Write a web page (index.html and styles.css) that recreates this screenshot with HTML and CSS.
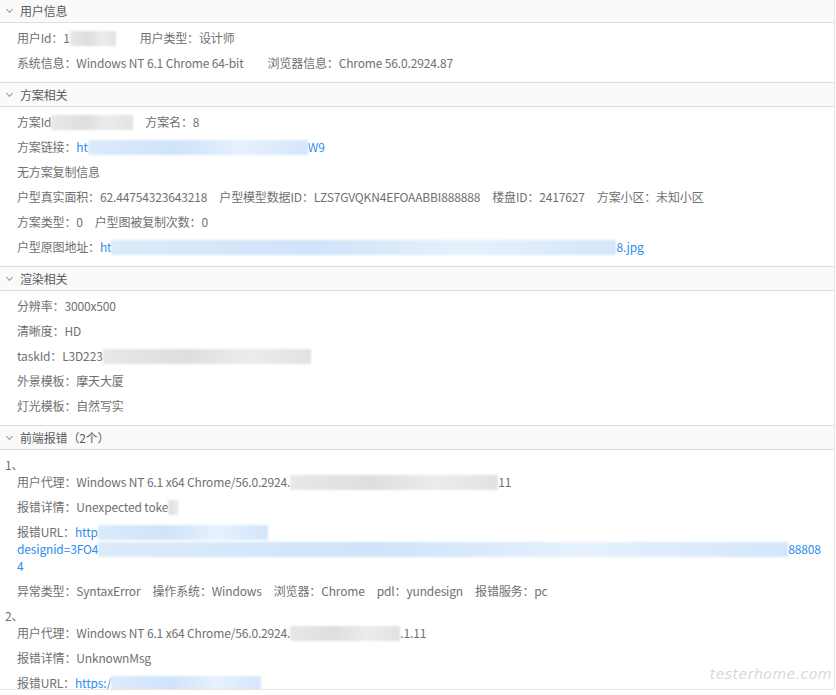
FILE: index.html
```html
<!DOCTYPE html>
<html lang="zh">
<head>
<meta charset="utf-8">
<link rel="stylesheet" href="styles.css">
</head>
<body>
<div class="panel">
  <section class="sec first">
    <div class="head"><span class="chev"></span><span class="title">用户信息</span></div>
    <div class="body">
      <div class="row wide"><span class="f">用户Id：1<span class="rd gray w46"></span></span><span class="f">用户类型：设计师</span></div>
      <div class="row wide"><span class="f">系统信息：Windows NT 6.1 Chrome 64-bit</span><span class="f">浏览器信息：Chrome 56.0.2924.87</span></div>
    </div>
  </section>
  <section class="sec">
    <div class="head"><span class="chev"></span><span class="title">方案相关</span></div>
    <div class="body">
      <div class="row"><span class="f">方案Id<span class="rd gray w82"></span></span><span class="f">方案名：8</span></div>
      <div class="row"><span class="f">方案链接：<a class="lk">ht<span class="rd blue w220"></span>W9</a></span></div>
      <div class="row"><span class="f">无方案复制信息</span></div>
      <div class="row"><span class="f">户型真实面积：62.44754323643218</span><span class="f">户型模型数据ID：LZS7GVQKN4EFOAABBI888888</span><span class="f">楼盘ID：2417627</span><span class="f">方案小区：未知小区</span></div>
      <div class="row"><span class="f">方案类型：0</span><span class="f">户型图被复制次数：0</span></div>
      <div class="row"><span class="f">户型原图地址：<a class="lk">ht<span class="rd blue w505"></span>8.jpg</a></span></div>
    </div>
  </section>
  <section class="sec">
    <div class="head"><span class="chev"></span><span class="title">渲染相关</span></div>
    <div class="body">
      <div class="row"><span class="f">分辨率：3000x500</span></div>
      <div class="row"><span class="f">清晰度：HD</span></div>
      <div class="row"><span class="f">taskId：L3D223<span class="rd gray w208"></span></span></div>
      <div class="row"><span class="f">外景模板：摩天大厦</span></div>
      <div class="row"><span class="f">灯光模板：自然写实</span></div>
    </div>
  </section>
  <section class="sec">
    <div class="head"><span class="chev"></span><span class="title">前端报错（2个）</span></div>
    <div class="body errs">
      <div class="item">
        <div class="idx">1、</div>
        <div class="row"><span class="f">用户代理：Windows NT 6.1 x64 Chrome/56.0.2924.<span class="rd gray w208"></span>11</span></div>
        <div class="row"><span class="f">报错详情：Unexpected toke<span class="rd gray w10"></span></span></div>
        <div class="row url"><span class="f">报错URL：<a class="lk">http<span class="rd blue w170"></span><br>designid=3FO4<span class="rd blue w690"></span>88808<br>4</a></span></div>
        <div class="row"><span class="f">异常类型：SyntaxError</span><span class="f">操作系统：Windows</span><span class="f">浏览器：Chrome</span><span class="f">pdl：yundesign</span><span class="f">报错服务：pc</span></div>
      </div>
      <div class="item">
        <div class="idx">2、</div>
        <div class="row"><span class="f">用户代理：Windows NT 6.1 x64 Chrome/56.0.2924.<span class="rd gray w110"></span>.1.11</span></div>
        <div class="row"><span class="f">报错详情：UnknownMsg</span></div>
        <div class="row"><span class="f">报错URL：<a class="lk">https:/<span class="rd blue w150"></span></a></span></div>
      </div>
    </div>
  </section>
  <div class="mark">testerhome.com</div>
</div>
</body>
</html>
```
FILE: styles.css
```css
html, body {
  margin: 0;
  padding: 0;
  background: #ffffff;
}
.panel {
  position: relative;
  width: 834px;
  height: 689px;
  border-right: 1px solid #e6e6e6;
  border-bottom: 1px solid #e6e6e6;
  overflow: hidden;
  font-family: "Noto Sans CJK SC", sans-serif;
  font-size: 12px;
  letter-spacing: -0.15px;
  color: #707070;
}
.sec.first {
  margin-top: -2px;
}
.head {
  display: flex;
  align-items: center;
  height: 23px;
  background: #fafafa;
  border-top: 1px solid #dddddd;
  border-bottom: 1px solid #dddddd;
  color: #5a5a5a;
  font-size: 12px;
}
.chev {
  width: 4px;
  height: 4px;
  margin: 0 8px 2px 7px;
  border-right: 1px solid #999999;
  border-bottom: 1px solid #999999;
  transform: rotate(45deg);
}
.title {
  line-height: 17px;
}
.body {
  padding: 6px 0 3px 17px;
}
.row {
  display: flex;
  gap: 12px;
  line-height: 17px;
  margin-bottom: 8px;
  white-space: nowrap;
}
.row.wide {
  gap: 24px;
}
.row.url {
  white-space: normal;
}
.f {
  display: inline-block;
}
.lk {
  color: #2d8cf0;
  text-decoration: none;
}
.errs {
  padding-left: 0;
}
.idx {
  line-height: 17px;
  padding-left: 5px;
}
.errs .row {
  padding-left: 17px;
}
.rd {
  display: inline-block;
  height: 15px;
  vertical-align: -3px;
  filter: blur(1px);
}
.rd.gray {
  background: linear-gradient(90deg, #e8e8e8, #dedede 40%, #ececec 70%, #e2e2e2);
}
.rd.blue {
  background: linear-gradient(90deg, #dcebfb, #cfe3fa 40%, #e6f1fd 70%, #d4e6fb);
}
.w10 { width: 10px; }
.w46 { width: 46px; }
.w82 { width: 82px; }
.w110 { width: 110px; }
.w150 { width: 150px; }
.w170 { width: 170px; }
.w208 { width: 208px; }
.w220 { width: 220px; }
.w505 { width: 505px; }
.w690 { width: 690px; }
.mark {
  position: absolute;
  right: 2px;
  bottom: 7px;
  font-family: "DejaVu Sans", sans-serif;
  font-weight: 200;
  font-style: italic;
  font-size: 14px;
  letter-spacing: 0.5px;
  color: #d8d8d8;
}
```
